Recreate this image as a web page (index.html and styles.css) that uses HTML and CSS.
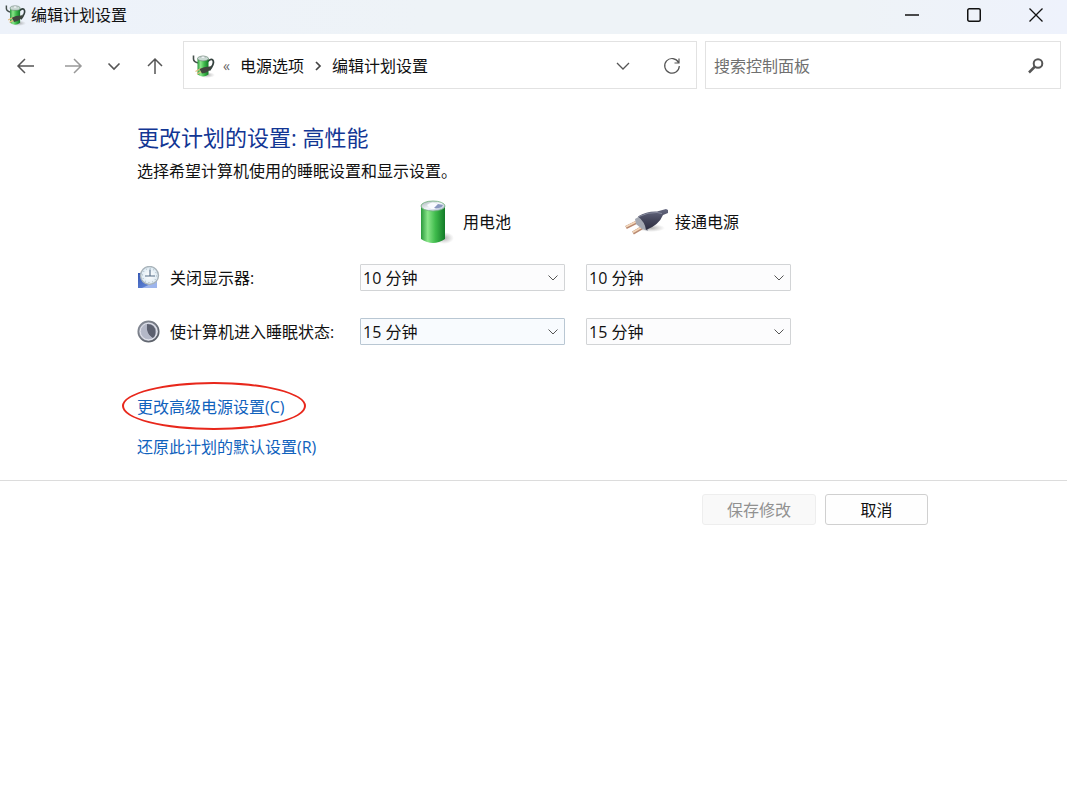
FILE: index.html
```html
<!DOCTYPE html>
<html lang="zh-CN">
<head>
<meta charset="utf-8">
<meta name="viewport" content="width=device-width, initial-scale=1">
<title>编辑计划设置</title>
<link rel="stylesheet" href="styles.css">
</head>
<body>
<svg class="defs" aria-hidden="true">
  <defs>
    <linearGradient id="green" x1="0" x2="1" y1="0" y2="0">
      <stop offset="0" stop-color="#2a9a3c"/><stop offset=".28" stop-color="#8ae68a"/><stop offset=".6" stop-color="#3fbb4c"/><stop offset="1" stop-color="#127a27"/>
    </linearGradient>
    <linearGradient id="cap" x1="0" x2="1" y1="0" y2="1">
      <stop offset="0" stop-color="#a3b0b3"/><stop offset=".5" stop-color="#f3f6fa"/><stop offset="1" stop-color="#a3b0cc"/>
    </linearGradient>
    <linearGradient id="plug" x1="0" x2="0" y1="0" y2="1">
      <stop offset="0" stop-color="#666980"/><stop offset=".5" stop-color="#45475c"/><stop offset="1" stop-color="#2c2d40"/>
    </linearGradient>
    <linearGradient id="screen" x1="0" x2="1" y1="0" y2="1">
      <stop offset="0" stop-color="#3557b4"/><stop offset="1" stop-color="#6f93e0"/>
    </linearGradient>
    <radialGradient id="face">
      <stop offset="0" stop-color="#ffffff"/><stop offset="1" stop-color="#dbe9f2"/>
    </radialGradient>
    <linearGradient id="rim" x1="0" x2="1" y1="0" y2="1">
      <stop offset="0" stop-color="#8b909b"/><stop offset="1" stop-color="#535861"/>
    </linearGradient>
    <linearGradient id="moon" x1="0" x2="1" y1="0" y2="1">
      <stop offset="0" stop-color="#a4a8b4"/><stop offset="1" stop-color="#f0f1f8"/>
    </linearGradient>
    <radialGradient id="shade">
      <stop offset="0" stop-color="#777" stop-opacity=".6"/><stop offset="1" stop-color="#999" stop-opacity="0"/>
    </radialGradient>
    <symbol id="power" viewBox="0 0 24 24">
      <ellipse cx="15" cy="21" rx="8" ry="3" fill="url(#shade)"/>
      <path d="M1.500 1.500v3.500q0 3 5 4" fill="none" stroke="#46504d" stroke-width="1.600"/>
      <path d="M15.500 7.500q4.500-4 5.800-.5 1 3-4 9.500" fill="none" stroke="#35423f" stroke-width="1.800"/>
      <path d="M5.500 4.500v16q5.500 4 11 0v-16z" fill="url(#green)"/>
      <ellipse cx="11" cy="4.500" rx="5.500" ry="2.400" fill="#cbdad4" stroke="#65806f" stroke-width=".6"/>
      <path d="M9 4v-1.500q2-1 4 0V4" fill="#edf2f3" stroke="#879490" stroke-width=".5"/>
      <path d="M3.500 17.500l5.500-3M5 20l5.500-3" stroke="#e3bd7f" stroke-width="1.400"/>
      <path d="M7.500 15q4-2.500 10-2.500 1.500 0 2-1.500l-.5 3q-3 5-9 5.500z" fill="#40463e"/>
    </symbol>
    <symbol id="chev" viewBox="0 0 12 12"><path d="M1.500 3.500l4.500 4.500 4.500-4.500" fill="none" stroke="currentColor"/></symbol>
  </defs>
</svg>

<header class="titlebar">
  <svg class="app-icon"><use href="#power"/></svg>
  <span class="window-title">编辑计划设置</span>
  <button class="caption" aria-label="最小化"><svg width="16" height="16"><path d="M1 8h14" stroke="currentColor" stroke-width="1.500"/></svg></button>
  <button class="caption" aria-label="最大化"><svg width="16" height="16"><rect x="1.750" y="1.750" width="12.500" height="12.500" rx="1.500" fill="none" stroke="currentColor" stroke-width="1.500"/></svg></button>
  <button class="caption" aria-label="关闭"><svg width="16" height="16"><path d="M1.500 1.500l13 13M14.500 1.500l-13 13" stroke="currentColor" stroke-width="1.300"/></svg></button>
</header>

<nav class="toolbar">
  <div class="history">
    <button class="tool back" aria-label="后退"><svg width="20" height="20" fill="none" stroke="currentColor" stroke-width="1.500"><path d="M18 10H2.500M9 3l-7 7 7 7"/></svg></button>
    <button class="tool forward" aria-label="前进"><svg width="20" height="20" fill="none" stroke="currentColor" stroke-width="1.500"><path d="M2 10h15.500M11 3l7 7-7 7"/></svg></button>
    <button class="tool" aria-label="最近的位置"><svg width="14" height="14" fill="none" stroke="currentColor" stroke-width="1.600"><path d="M1.500 4.500L7 10l5.500-5.500"/></svg></button>
    <button class="tool" aria-label="向上"><svg width="20" height="20" fill="none" stroke="currentColor" stroke-width="1.500"><path d="M10 18V3.500M3 10l7-7 7 7"/></svg></button>
  </div>
  <div class="address">
    <svg class="path-icon"><use href="#power"/></svg>
    <span class="overflow">«</span>
    <button class="crumb">电源选项</button>
    <svg class="sep" width="8" height="12" fill="none" stroke="currentColor" stroke-width="1.700"><path d="M2 2l4 4-4 4"/></svg>
    <button class="crumb last">编辑计划设置</button>
    <button class="tool drop" aria-label="以前的位置"><svg width="14" height="14" fill="none" stroke="currentColor" stroke-width="1.300"><path d="M1 4l6 6 6-6"/></svg></button>
    <button class="tool" aria-label="刷新"><svg width="18" height="18" fill="none" stroke="currentColor" stroke-width="1.200"><path d="M15.500 5.500A7.300 7.300 0 1 0 16.300 9M16 1.500v4.500h-4.500"/></svg></button>
  </div>
  <div class="search">
    <input class="search-input" type="text" placeholder="搜索控制面板" aria-label="搜索控制面板">
    <button class="tool" aria-label="搜索"><svg width="18" height="18" fill="none" stroke="currentColor"><circle cx="11" cy="6.500" r="4.300" stroke-width="2"/><path d="M8 9.500L2 15.500" stroke-width="2.500"/></svg></button>
  </div>
</nav>

<main class="content">
  <h1 class="heading">更改计划的设置: 高性能</h1>
  <p class="intro">选择希望计算机使用的睡眠设置和显示设置。</p>

  <div class="plan">
    <div class="source battery">
      <svg width="34" height="44" viewBox="0 0 34 44">
        <ellipse cx="24" cy="38" rx="10" ry="6" fill="url(#shade)"/>
        <path d="M1 6v33q12 8 24 0V6z" fill="url(#green)"/>
        <ellipse cx="13" cy="6" rx="12" ry="5" fill="url(#cap)" stroke="#6fae7b" stroke-width=".8"/>
        <path d="M7 5q6-5 11 0l-3 4h-4z" fill="#f9fbff"/><path d="M14 8l4-4 5 1q-2 4-9 3z" fill="#8998c0"/>
      </svg>
      <span>用电池</span>
    </div>
    <div class="source mains">
      <svg width="44" height="28" viewBox="0 0 44 28">
        <ellipse cx="26" cy="20" rx="14" ry="4" fill="url(#shade)"/>
        <path d="M1 19.500l12-6M8 25l12-7" stroke="#b98a72" stroke-width="3.400"/>
        <path d="M1 18.800l12-6M8 24.300l12-7" stroke="#f4d8bb" stroke-width="1.700"/>
        <path d="M10 11l5-3 9 9-1 6-6-2-6-5z" fill="#a4a8b2"/>
        <path d="M13 8.500q9-5.500 19-5l9-2.500 2 1v3l-5 2q-4 10-17 15-1-8-8-13.500z" fill="url(#plug)"/>
        <path d="M14 8.500q9-4.500 18-4l5 1" stroke="#85899c" fill="none"/>
      </svg>
      <span>接通电源</span>
    </div>

    <div class="setting">
      <svg width="23" height="24" viewBox="0 0 23 24">
        <path d="M1 7h19v15H1z" fill="url(#screen)"/><path d="M5 22l15-7v7z" fill="#9db5ed"/>
        <circle cx="12.500" cy="9.500" r="9" fill="url(#face)" stroke="#a8b3ba" stroke-width="1.400"/>
        <circle cx="12.500" cy="9.500" r="7" fill="none" stroke="#9fb1bf" stroke-dasharray="1 2.665"/>
        <path d="M13 3.500V10h5M13 10H8" stroke="#536c85" stroke-width="1.100" fill="none"/>
      </svg>
      <span>关闭显示器:</span>
    </div>
    <div class="picker"><select class="choice" aria-label="关闭显示器: 用电池"><option>10 分钟</option></select><svg class="arrow"><use href="#chev"/></svg></div>
    <div class="picker"><select class="choice" aria-label="关闭显示器: 接通电源"><option>10 分钟</option></select><svg class="arrow"><use href="#chev"/></svg></div>

    <div class="setting">
      <svg width="23" height="24" viewBox="0 0 23 24">
        <circle cx="11.500" cy="11.500" r="10.200" fill="url(#moon)" stroke="url(#rim)" stroke-width="1.700"/>
        <circle cx="11.500" cy="11.500" r="8.300" fill="#b9bccb" stroke="#e0e2eb"/>
        <path d="M10 4q8.500 0 8.500 8 0 5-3 6Q8 13 10 4z" fill="#5c606f"/>
        <path d="M10 4q-1.500 10 5.500 14-7 2.500-10-2.500Q2 7.500 10 4z" fill="#b4b8c7"/>
      </svg>
      <span>使计算机进入睡眠状态:</span>
    </div>
    <div class="picker"><select class="choice hot" aria-label="使计算机进入睡眠状态: 用电池"><option>15 分钟</option></select><svg class="arrow"><use href="#chev"/></svg></div>
    <div class="picker"><select class="choice" aria-label="使计算机进入睡眠状态: 接通电源"><option>15 分钟</option></select><svg class="arrow"><use href="#chev"/></svg></div>
  </div>

  <div class="links">
    <a class="link marked" href="#advanced">更改高级电源设置(C)</a>
    <a class="link" href="#restore">还原此计划的默认设置(R)</a>
  </div>
</main>

<footer class="actions">
  <button class="btn save" disabled>保存修改</button>
  <button class="btn cancel">取消</button>
</footer>
</body>
</html>
```
FILE: styles.css
```css
* { box-sizing: border-box; }

body {
  margin: 0;
  background: #fff;
  color: #111;
  font: 16px/24px "Open Sans", "Noto Sans CJK SC", sans-serif;
}

button, input, select { font: inherit; color: inherit; }
button { padding: 0; border: 0; background: none; }
svg { display: block; flex: none; }
.defs { position: absolute; width: 0; height: 0; }

.titlebar {
  display: flex;
  align-items: center;
  height: 34px;
  padding-left: 5px;
  padding-bottom: 4px;
  background: linear-gradient(90deg, #edf2fa, #eef3f7 40%, #eef3f7 80%, #eef2fc);
}
.app-icon { width: 22px; height: 24px; margin-right: 4px; }
.window-title { flex: 1; }
.caption { display: grid; place-items: center; width: 62px; height: 30px; }

.toolbar { display: flex; gap: 8px; padding: 7px 6px; }
.history { display: flex; align-items: center; gap: 1px; padding-top: 1px; }
.tool { display: grid; place-items: center; flex: none; width: 40px; height: 40px; color: #555; }
.back { margin-right: 6px; }
.forward { color: #999; }

.address, .search {
  display: flex;
  align-items: center;
  min-width: 0;
  height: 48px;
  padding-top: 1px;
  border: 1px solid #e2e2e2;
}
.address { flex: 1 1 0; padding-right: 4px; padding-left: 8px; }
.path-icon { width: 24px; height: 24px; }
.overflow { width: 24px; padding-left: 7px; color: #666; font-size: 14px; }
.crumb { white-space: nowrap; }
.sep { margin: 0 10px; color: #444; }
.last { margin-right: auto; }
.drop { margin-right: 9px; }

.search { flex: 0 1 356px; padding-right: 4px; padding-left: 8px; }
.search-input { flex: 1; min-width: 0; padding: 0; border: 0; outline: 0; background: none; }
.search-input::placeholder { color: #707070; opacity: 1; }

.content { padding: 25px 137px 21px; }
.heading { margin: 0; color: #123694; font-size: 22px; line-height: 32px; font-weight: 400; }
.intro { margin: 6px 0 17px; }

.plan {
  display: grid;
  grid-template-columns: 202px minmax(0, 205px) minmax(0, 205px);
  column-gap: 21px;
  row-gap: 27px;
}
.source { display: flex; align-items: center; height: 44px; margin-bottom: -7px; }
.battery { grid-column: 2; gap: 9px; padding-left: 60px; }
.mains { gap: 6px; padding-left: 39px; }
.setting { display: flex; align-items: center; gap: 10px; height: 27px; white-space: nowrap; }

.picker { position: relative; }
.choice {
  display: block;
  width: 100%;
  height: 27px;
  padding: 0 24px 0 2px;
  border: 1px solid #d2d4d6;
  border-radius: 1px;
  background: #fcfcfd;
  line-height: 24px;
  appearance: none;
}
.hot { border-color: #b9c7d3; background: #f8fbfe; }
.arrow { position: absolute; top: 8px; right: 6px; width: 12px; height: 12px; color: #555; pointer-events: none; }

.links { display: flex; flex-direction: column; align-items: flex-start; gap: 16px; margin-top: 50px; }
.link { position: relative; color: #1062bd; text-decoration: none; }
.marked::after {
  content: "";
  position: absolute;
  inset: -13px -21px -11px -15px;
  border: 2px solid #e8271b;
  border-radius: 50%;
  pointer-events: none;
}

.actions {
  display: flex;
  justify-content: flex-end;
  gap: 9px;
  padding: 13px 139px 13px 0;
  border-top: 1px solid #dcdcdc;
}
.btn { height: 31px; border: 1px solid #d0d0d0; border-radius: 3px; background: #fefefe; }
.save { width: 114px; border-color: #eee; background: #f9f9f9; color: #919191; }
.cancel { width: 103px; }
```
